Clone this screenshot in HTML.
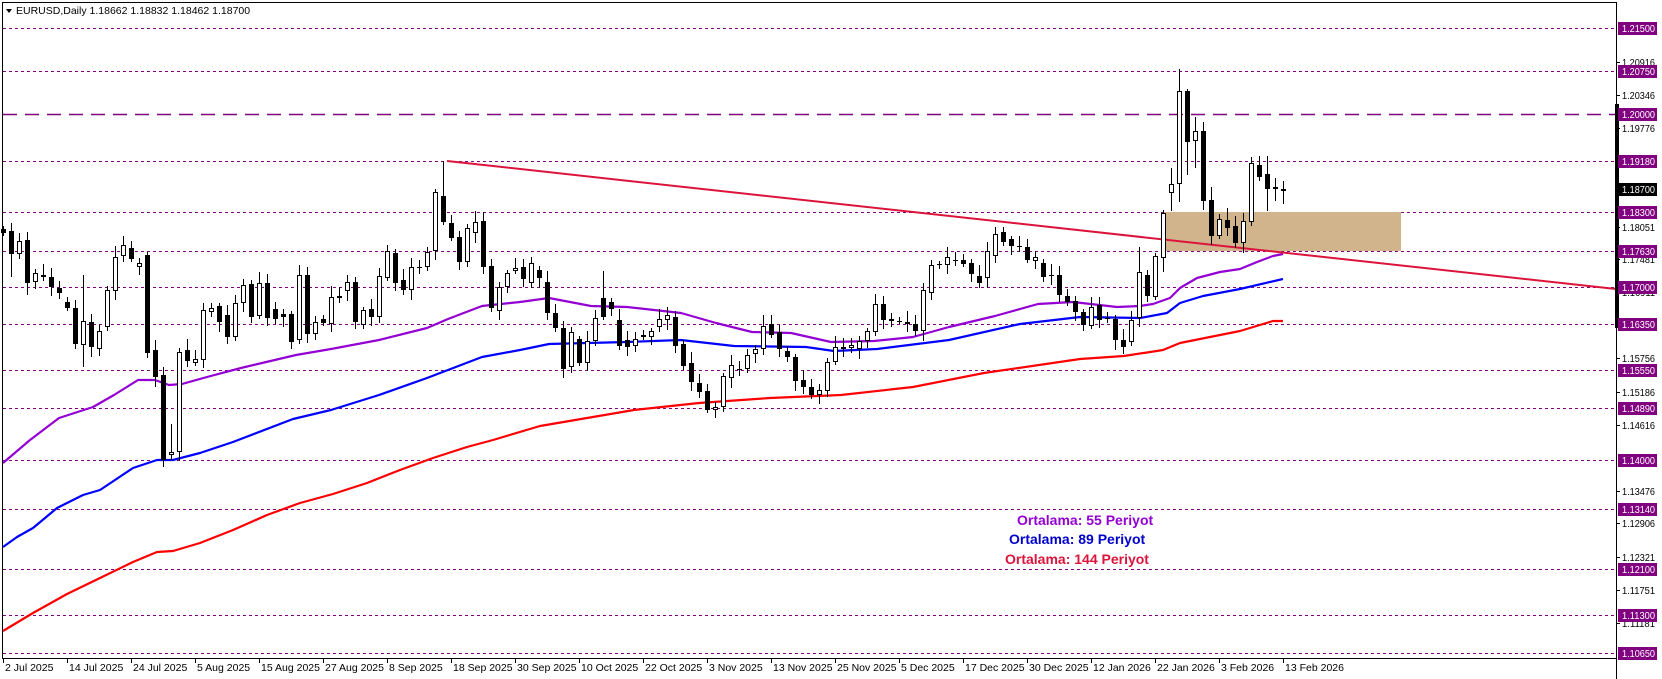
<!DOCTYPE html>
<html><head><meta charset="utf-8"><style>
html,body{margin:0;padding:0;background:#fff;width:1662px;height:679px;overflow:hidden}
svg{display:block;font-family:"Liberation Sans",sans-serif}
</style></head><body>
<svg id="s" width="1662" height="679" viewBox="0 0 1662 679" xmlns="http://www.w3.org/2000/svg">
<rect x="0" y="0" width="1662" height="679" fill="#fff"/>
<g id="lv"></g>
<rect x="1163" y="212" width="238" height="39" fill="#D2B48C"/>
<g id="ma"></g>
<line x1="447" y1="161" x2="1616" y2="289" stroke="#DC143C" stroke-width="2"/>
<g id="cd"></g>
<text x="1017" y="525" font-size="14" font-weight="bold" fill="#9400D3">Ortalama: 55 Periyot</text>
<text x="1009" y="544" font-size="14" font-weight="bold" fill="#0000CD">Ortalama: 89 Periyot</text>
<text x="1005" y="564" font-size="14" font-weight="bold" fill="#DC143C">Ortalama: 144 Periyot</text>
<line x1="2.5" y1="2" x2="2.5" y2="658" stroke="#000"/>
<line x1="2" y1="2.5" x2="1616" y2="2.5" stroke="#000"/>
<line x1="2" y1="658.5" x2="1616" y2="658.5" stroke="#000"/>
<line x1="1616.5" y1="2" x2="1616.5" y2="679" stroke="#000"/>
<rect x="1615" y="104" width="4" height="224" fill="#000"/>
<g id="ax"></g>
<polygon points="6,9 12,9 9,13" fill="#000"/>
<text x="16" y="14" font-size="10.5" fill="#000">EURUSD,Daily  1.18662 1.18832 1.18462 1.18700</text>
</svg>
<script>
var NS="http://www.w3.org/2000/svg";
function el(p,t,a,txt){var e=document.createElementNS(NS,t);for(var k in a)e.setAttribute(k,a[k]);if(txt!==undefined)e.textContent=txt;document.getElementById(p).appendChild(e);return e;}
var levels=[[1.215,28],[1.2075,71],[1.2,114],[1.1918,161],[1.183,212],[1.1763,251],[1.17,287],[1.1635,324],[1.1555,370],[1.1489,408],[1.14,460],[1.1314,509],[1.121,569],[1.113,615],[1.1065,653]];
levels.forEach(function(l){
 var big=l[0]===1.2;
 el("lv","line",{x1:3,x2:1616,y1:l[1]+0.5,y2:l[1]+0.5,stroke:"#800080","stroke-width":big?1.6:1,"stroke-dasharray":big?"14,8":"3,3"});
});
function poly(pts,c){el("ma","polyline",{points:pts.map(function(p){return p.join(",")}).join(" "),fill:"none",stroke:c,"stroke-width":2.2,"stroke-linejoin":"round"});}
poly([[3,463],[30,440],[59,418],[93,407],[114,395],[138,380],[155,380],[169,385],[182,384],[207,377],[241,368],[262,363],[296,355],[331,349],[379,340],[427,328],[448,319],[482,306],[520,302],[549,298],[591,306],[627,307],[681,313],[716,323],[752,332],[791,333],[831,342],[874,341],[913,337],[949,327],[995,316],[1038,304],[1073,302],[1117,307],[1140,306],[1153,304],[1170,298],[1180,288],[1197,278],[1220,272],[1240,269],[1257,262],[1273,256],[1283,254]],"#9400D3");
poly([[3,547],[17,537],[33,528],[57,508],[83,495],[100,490],[133,468],[157,460],[173,460],[200,453],[233,442],[293,419],[331,410],[379,395],[427,378],[482,357],[520,350],[549,344],[627,342],[681,340],[734,346],[806,347],[834,351],[877,349],[949,340],[1020,324],[1080,317],[1140,318],[1167,313],[1180,303],[1203,296],[1240,289],[1283,279]],"#0000FF");
poly([[3,631],[33,613],[67,594],[100,578],[133,562],[157,552],[173,551],[200,543],[233,530],[267,515],[300,503],[333,494],[367,483],[400,470],[433,458],[467,447],[493,440],[540,426],[634,410],[699,403],[770,398],[841,395],[913,387],[984,373],[1080,359],[1124,356],[1163,350],[1180,343],[1240,331],[1273,321],[1283,321]],"#FF0000");
var D="b 229 233|b 231 254 223 277|w 241 254|b 240 283 232 295|w 273 282|w 275 277|b 277 287|b 288 293|b 302 308|b 308 344 300 349|w 321 345 275 367|b 322 347|w 331 349|w 290 327|w 257 291|w 245 256|b 248 259|w 263 267|b 255 353|b 350 377|b 375 460|w 452 455 424 460|w 352 452|b 350 361|w 359 363|w 310 360|w 308 312|b 306 322|b 315 337|w 303 337|w 285 303|b 284 317|w 283 316|b 283 318|b 309 319|b 314 317|b 314 342|w 275 340|b 275 334|w 322 334|b 319 323|w 297 324|w 296 298|w 282 291|b 282 322|w 310 325|b 309 317|w 276 317|w 251 278|b 253 283|b 280 290|w 267 290|c 267|w 252 267|w 192 251|b 196 222 161 225|b 223 238|b 237 262|w 228 262|w 222 233|b 221 267|b 266 308|w 287 311|w 273 287|w 268 271|b 267 279|w 263 283|b 270 278|b 282 313|b 313 328|b 328 369|w 332 367|b 339 363|w 341 363|w 318 341|b 298 317 271 320|b 302 309|b 320 346|b 340 347|w 339 346|w 335 337|w 331 337|w 319 327|w 315 320|b 317 346|b 344 366|b 363 382|b 383 392|b 391 410|w 407 410|w 376 407|w 365 378|c 369|w 355 369|w 349 354|w 326 349|b 324 335|b 332 349|b 351 357|b 357 381|b 380 387|b 387 395|w 390 395|w 362 391|w 347 362|b 347 349|w 345 348|w 341 349|w 331 341|w 304 332|b 304 320|b 319 321|c 321|b 322 324|b 324 331|w 290 331|w 265 293|b 264 265|w 257 265|c 260|b 260 264|b 263 274|b 276 283|w 251 278|w 234 256|b 232 242|b 239 246|c 246|b 247 260|w 257 261|b 263 277|c 275|b 275 295|b 296 302|b 301 312|b 312 325|w 307 326|b 305 320|c 318|b 319 340|b 340 347|w 320 342|w 272 318 247 327|b 275 296|w 256 297|w 213 258 210 272|w 184 193 168 211|w 91 184 69 202|b 91 142 89 175|w 131 141 117 168|b 131 201|b 200 236 187 245|w 219 236|b 220 228 208 236|b 226 243|w 221 243|w 163 222 157 226|b 165 177 156 181|b 174 189 156 211|b 187 189 178 201|w 189 191 181 204".split("|");
var n=D.length;
D.forEach(function(s,i){
 var p=s.split(" "),x=1283-8*(n-1-i);
 var t=p[0],a=+p[1],b=p[2]!==undefined?+p[2]:a;
 var h=p[3]!==undefined?+p[3]:a-(3+(i*7)%9),l=p[4]!==undefined?+p[4]:b+(3+(i*5)%8);
 el("cd","line",{x1:x+0.5,x2:x+0.5,y1:h,y2:l,stroke:"#000"});
 if(t==="c"){el("cd","line",{x1:x-2,x2:x+3,y1:a+0.5,y2:a+0.5,stroke:"#000"});}
 else if(t==="b"){el("cd","rect",{x:x-2,y:a,width:5,height:Math.max(1,b-a),fill:"#000"});}
 else{el("cd","rect",{x:x-1.5,y:a+0.5,width:4,height:Math.max(1,b-a-1),fill:"#fff",stroke:"#000"});}
});
var blk=[["1.20916",62],["1.20346",95],["1.19776",128],["1.18051",227],["1.17481",259],["1.16911",292],["1.15756",358],["1.15186",392],["1.14616",425],["1.13476",491],["1.12906",523],["1.12321",557],["1.11751",590],["1.11181",623]];
blk.forEach(function(b){el("ax","line",{x1:1616,x2:1620,y1:b[1]+0.5,y2:b[1]+0.5,stroke:"#000"});el("ax","text",{x:1622,y:b[1]+4,"font-size":10,textLength:33,lengthAdjust:"spacingAndGlyphs",fill:"#000"},b[0]);});
levels.forEach(function(l){el("ax","rect",{x:1618,y:l[1]-6,width:39,height:13,fill:"#800080"});el("ax","text",{x:1622,y:l[1]+4,"font-size":10,textLength:33,lengthAdjust:"spacingAndGlyphs",fill:"#fff"},l[0].toFixed(5));});
el("ax","rect",{x:1618,y:183,width:39,height:13,fill:"#000"});
el("ax","text",{x:1622,y:193,"font-size":10,textLength:33,lengthAdjust:"spacingAndGlyphs",fill:"#fff"},"1.18700");
var dates=["2 Jul 2025","14 Jul 2025","24 Jul 2025","5 Aug 2025","15 Aug 2025","27 Aug 2025","8 Sep 2025","18 Sep 2025","30 Sep 2025","10 Oct 2025","22 Oct 2025","3 Nov 2025","13 Nov 2025","25 Nov 2025","5 Dec 2025","17 Dec 2025","30 Dec 2025","12 Jan 2026","22 Jan 2026","3 Feb 2026","13 Feb 2026"];
dates.forEach(function(d,i){var x=3+64*i;el("ax","line",{x1:x+0.5,x2:x+0.5,y1:658,y2:663,stroke:"#000"});el("ax","text",{x:x+2,y:671,"font-size":10.5,fill:"#000"},d);});
</script>
</body></html>
